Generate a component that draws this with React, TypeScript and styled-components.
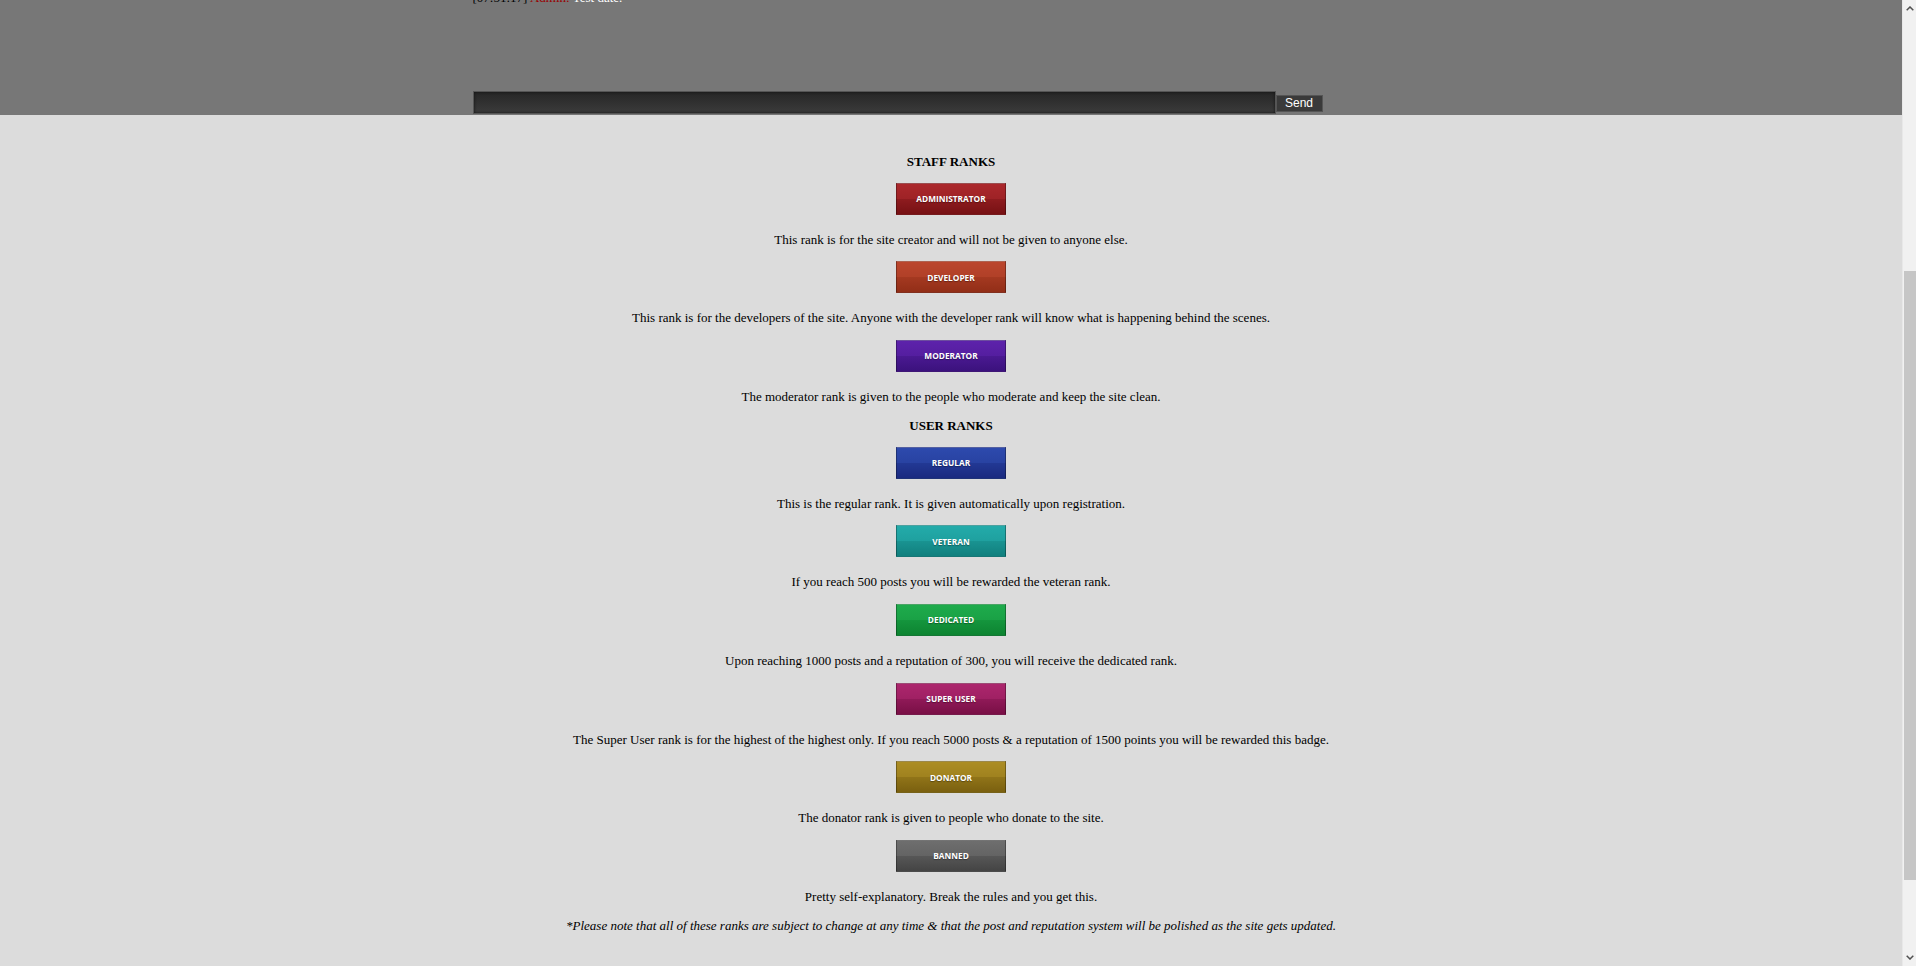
import React, { useLayoutEffect, useRef } from "react";
import styled, { createGlobalStyle } from "styled-components";

const GlobalStyle = createGlobalStyle`
  html, body {
    margin: 0;
    padding: 0;
    background: #dcdcdc;
    overflow: hidden;
  }
  body {
    font-family: "Liberation Serif", "Times New Roman", serif;
    font-size: 13px;
    color: #000;
  }
`;

const SCROLL_TOP = 403;
const CONTENT_H = 1478;
const VIEW_H = 966;
const ARROW_H = 17;

const Shell = styled.div`
  display: flex;
  height: 100vh;
  width: 100vw;
`;

const Viewport = styled.div`
  flex: 1;
  min-width: 0;
  overflow-y: auto;
  scrollbar-width: none;
  &::-webkit-scrollbar {
    display: none;
  }
`;

const Page = styled.div`
  display: flex;
  flex-direction: column;
  min-height: ${CONTENT_H}px;
`;

const ScrollBar = styled.div`
  width: 13px;
  flex: none;
  display: flex;
  flex-direction: column;
  background: #f1f1f1;
  border-left: 1px solid #e8e8e8;
`;

const ArrowButton = styled.div`
  height: ${ARROW_H}px;
  flex: none;
  display: flex;
  align-items: center;
  justify-content: center;
  color: #505050;
`;

const Track = styled.div`
  flex: 1;
  display: flex;
  flex-direction: column;
  padding: 0 0 0 1px;
`;

const Thumb = styled.div<{ $offset: number; $size: number }>`
  margin-top: ${(p) => p.$offset}px;
  height: ${(p) => p.$size}px;
  background: #c6c6c6;
`;

const ChatArea = styled.section`
  background: #777777;
  padding-bottom: 1px;
`;

const Wrap = styled.div`
  width: 960px;
  margin: 0 auto;
  padding-left: 1.5px;
  box-sizing: border-box;
`;

const ChatLog = styled.div`
  height: 408px;
  display: flex;
  flex-direction: column;
  justify-content: flex-end;
  overflow: hidden;
`;

const ChatLine = styled.div`
  line-height: 15px;
  font-size: 13px;
  color: #fff;
`;

const Time = styled.span`
  color: #000;
`;

const Name = styled.span`
  color: #990000;
`;

const InputRow = styled.div`
  margin-top: 86px;
  display: flex;
  align-items: flex-end;
`;

const ChatInput = styled.input`
  width: 803px;
  height: 23px;
  box-sizing: border-box;
  border: 1px solid #555;
  background: linear-gradient(to bottom, #262626, #3b3b3b);
  box-shadow: inset 0 0 3px #111;
  color: #fff;
  outline: none;
  padding: 0 4px;
`;

const SendButton = styled.button`
  width: 47px;
  height: 17px;
  margin-bottom: 2px;
  box-sizing: border-box;
  border: 1px solid #555;
  background: #3a3a3a;
  color: #fff;
  font-family: "Liberation Sans", Arial, sans-serif;
  font-size: 12px;
  line-height: 13px;
  padding: 0;
  cursor: pointer;
`;

const Ranks = styled.section`
  display: flex;
  flex-direction: column;
  align-items: center;
  padding: 39px 0 0;
  text-align: center;
`;

const Heading = styled.h3`
  margin: 0 0 13.5px;
  font-size: 13px;
  line-height: 15px;
  font-weight: bold;
`;

const Badge = styled.div<{ $top: string; $bottom: string }>`
  width: 110px;
  height: 32px;
  box-sizing: border-box;
  display: flex;
  align-items: center;
  justify-content: center;
  border: 1px solid rgba(0, 0, 0, 0.3);
  border-top-color: rgba(255, 255, 255, 0.25);
  background: linear-gradient(
    to bottom,
    ${(p) => p.$top} 0%,
    color-mix(in srgb, ${(p) => p.$top} 75%, ${(p) => p.$bottom}) 50%,
    color-mix(in srgb, ${(p) => p.$top} 45%, ${(p) => p.$bottom}) 50%,
    ${(p) => p.$bottom} 100%
  );
  color: #fff;
  font-family: "Open Sans", "Noto Sans", sans-serif;
  font-weight: 700;
  font-size: 8.3px;
  text-shadow: 0 1px 1px rgba(0, 0, 0, 0.35);
`;

const Desc = styled.p`
  margin: 17px 0 14.6px;
  line-height: 15px;
  font-size: 13px;
`;

const Note = styled.p`
  margin: 0;
  line-height: 15px;
  font-size: 13px;
  font-style: italic;
`;

type Rank = { name: string; top: string; bottom: string; desc: string };

const staff: Rank[] = [
  {
    name: "ADMINISTRATOR",
    top: "#ab282c",
    bottom: "#771114",
    desc: "This rank is for the site creator and will not be given to anyone else.",
  },
  {
    name: "DEVELOPER",
    top: "#bb462d",
    bottom: "#922e17",
    desc: "This rank is for the developers of the site. Anyone with the developer rank will know what is happening behind the scenes.",
  },
  {
    name: "MODERATOR",
    top: "#5d22ab",
    bottom: "#3b127d",
    desc: "The moderator rank is given to the people who moderate and keep the site clean.",
  },
];

const users: Rank[] = [
  {
    name: "REGULAR",
    top: "#2d4aad",
    bottom: "#1a2a80",
    desc: "This is the regular rank. It is given automatically upon registration.",
  },
  {
    name: "VETERAN",
    top: "#23abaa",
    bottom: "#11807e",
    desc: "If you reach 500 posts you will be rewarded the veteran rank.",
  },
  {
    name: "DEDICATED",
    top: "#1eab4c",
    bottom: "#0d8431",
    desc: "Upon reaching 1000 posts and a reputation of 300, you will receive the dedicated rank.",
  },
  {
    name: "SUPER USER",
    top: "#ac266d",
    bottom: "#790f46",
    desc: "The Super User rank is for the highest of the highest only. If you reach 5000 posts & a reputation of 1500 points you will be rewarded this badge.",
  },
  {
    name: "DONATOR",
    top: "#ac8d24",
    bottom: "#7a600f",
    desc: "The donator rank is given to people who donate to the site.",
  },
  {
    name: "BANNED",
    top: "#6e6e6e",
    bottom: "#444444",
    desc: "Pretty self-explanatory. Break the rules and you get this.",
  },
];

function RankItem({ r }: { r: Rank }) {
  return (
    <>
      <Badge $top={r.top} $bottom={r.bottom}>
        {r.name}
      </Badge>
      <Desc>{r.desc}</Desc>
    </>
  );
}

function Chevron({ up }: { up: boolean }) {
  return (
    <svg width="8" height="5" viewBox="0 0 8 5" fill="none">
      <path
        d={up ? "M0.7 4.3 L4 1 L7.3 4.3" : "M0.7 0.7 L4 4 L7.3 0.7"}
        stroke="currentColor"
        strokeWidth="1.5"
      />
    </svg>
  );
}

export default function App() {
  const ref = useRef<HTMLDivElement>(null);
  useLayoutEffect(() => {
    if (ref.current) ref.current.scrollTop = SCROLL_TOP;
  }, []);

  const trackH = VIEW_H - ARROW_H * 2;
  const thumbOffset = Math.round((SCROLL_TOP / CONTENT_H) * trackH);
  const thumbSize = Math.round((VIEW_H / CONTENT_H) * trackH);

  return (
    <Shell>
      <GlobalStyle />
      <Viewport ref={ref}>
        <Page>
          <ChatArea>
            <Wrap>
              <ChatLog>
                <ChatLine>
                  <Time>[07:51:17]</Time> <Name>Admin:</Name> Test date.
                </ChatLine>
              </ChatLog>
              <InputRow>
                <ChatInput type="text" />
                <SendButton>Send</SendButton>
              </InputRow>
            </Wrap>
          </ChatArea>
          <Ranks>
            <Heading>STAFF RANKS</Heading>
            {staff.map((r) => (
              <RankItem key={r.name} r={r} />
            ))}
            <Heading>USER RANKS</Heading>
            {users.map((r) => (
              <RankItem key={r.name} r={r} />
            ))}
            <Note>
              *Please note that all of these ranks are subject to change at any time &amp; that the post
              and reputation system will be polished as the site gets updated.
            </Note>
          </Ranks>
        </Page>
      </Viewport>
      <ScrollBar>
        <ArrowButton>
          <Chevron up />
        </ArrowButton>
        <Track>
          <Thumb $offset={thumbOffset} $size={thumbSize} />
        </Track>
        <ArrowButton>
          <Chevron up={false} />
        </ArrowButton>
      </ScrollBar>
    </Shell>
  );
}
